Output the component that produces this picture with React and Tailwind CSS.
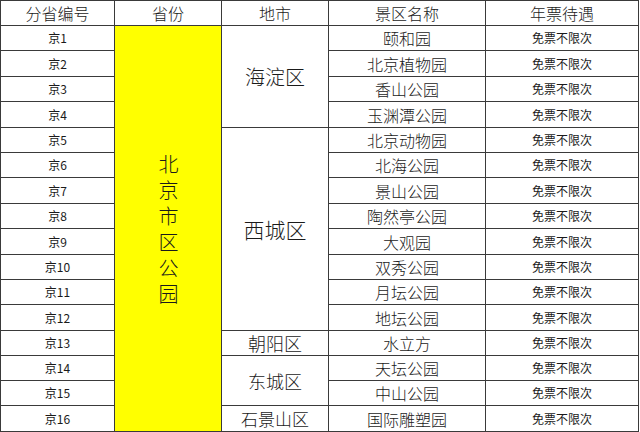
import React from "react";

const rows = [
  ["京1", "颐和园"],
  ["京2", "北京植物园"],
  ["京3", "香山公园"],
  ["京4", "玉渊潭公园"],
  ["京5", "北京动物园"],
  ["京6", "北海公园"],
  ["京7", "景山公园"],
  ["京8", "陶然亭公园"],
  ["京9", "大观园"],
  ["京10", "双秀公园"],
  ["京11", "月坛公园"],
  ["京12", "地坛公园"],
  ["京13", "水立方"],
  ["京14", "天坛公园"],
  ["京15", "中山公园"],
  ["京16", "国际雕塑园"],
];

const cjk = { fontFamily: '"Noto Sans CJK SC", "Noto Sans", sans-serif' };

export default function App() {
  return (
    <div className="w-[640px] h-[432px] bg-white overflow-hidden text-[#1a1a1a]" style={cjk}>
      <div className="grid w-[639px] h-[432px] bg-[#3a3a3a] gap-px p-px grid-cols-[113px_106px_106px_156px_152px] grid-rows-[24px_24px_25px_24px_25px_24px_24px_25px_24px_25px_24px_24px_25px_24px_24px_24px_25px]">
        {["分省编号", "省份", "地市", "景区名称", "年票待遇"].map((h) => (
          <div key={h} className="bg-white flex items-center justify-center text-[16px] font-light leading-none">
            {h}
          </div>
        ))}
        {rows.map(([id, name], i) => (
          <React.Fragment key={id}>
            <div
              className="bg-white flex items-center justify-center text-[12px] leading-none col-start-1"
              style={{ gridRowStart: i + 2 }}
            >
              {id}
            </div>
            <div
              className="bg-white flex items-center justify-center text-[16px] font-light leading-none col-start-4"
              style={{ gridRowStart: i + 2 }}
            >
              {name}
            </div>
            <div
              className="bg-white flex items-center justify-center text-[12px] leading-none col-start-5"
              style={{ gridRowStart: i + 2 }}
            >
              免票不限次
            </div>
          </React.Fragment>
        ))}
        <div className="bg-[#ffff00] col-start-2 row-start-2 row-end-[18] flex items-center justify-center pt-[6px]">
          <div className="[writing-mode:vertical-rl] text-[20px] font-light leading-none tracking-[6px]">
            北京市区公园
          </div>
        </div>
        <div className="bg-white col-start-3 row-start-2 row-end-6 flex items-center justify-center text-[20px] font-light leading-none">
          海淀区
        </div>
        <div className="bg-white col-start-3 row-start-6 row-end-[14] flex items-center justify-center text-[21px] font-light leading-none">
          西城区
        </div>
        <div className="bg-white col-start-3 row-start-[14] row-end-[15] flex items-center justify-center text-[18px] font-light leading-none">
          朝阳区
        </div>
        <div className="bg-white col-start-3 row-start-[15] row-end-[17] flex items-center justify-center text-[18px] font-light leading-none">
          东城区
        </div>
        <div className="bg-white col-start-3 row-start-[17] row-end-[18] flex items-center justify-center text-[17px] font-light leading-none">
          石景山区
        </div>
      </div>
    </div>
  );
}
